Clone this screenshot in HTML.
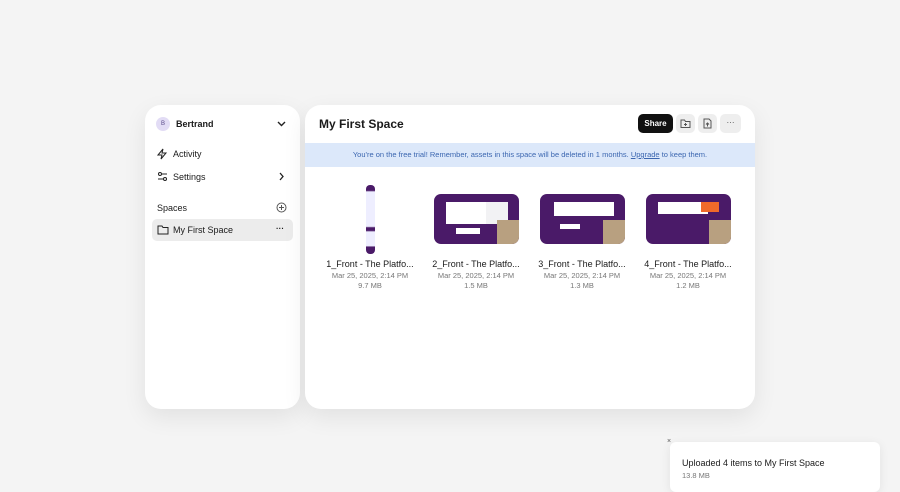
<!DOCTYPE html><html><head><style>
*{box-sizing:border-box;margin:0;padding:0}
body{width:900px;height:484px;background:#f4f4f4;font-family:"Liberation Sans",sans-serif;position:relative;overflow:hidden;color:#1a1a1a}
.p{position:absolute;background:#fff;border-radius:16px;box-shadow:0 8px 24px rgba(0,0,0,.08)}
.t{position:absolute;font-size:9px;white-space:nowrap}
.c{text-align:center;width:100px}
.g{color:#777;font-size:7.5px}
.th{position:absolute;top:194px;width:85px;height:50px;border-radius:7px;background:#4a1a68;overflow:hidden}
.b{position:absolute;top:9px;width:19px;height:19px;background:#eee;border-radius:5px}
.b svg{position:absolute;left:4px;top:4px}
</style></head><body>
<div class="p" style="left:145px;top:105px;width:155px;height:304px">
 <div style="position:absolute;left:11px;top:12px;width:14px;height:14px;border-radius:50%;background:#e2dcf5;font-size:6px;text-align:center;line-height:14px;color:#5a4a8a">B</div>
 <div class="t" style="left:31px;top:14px;font-weight:bold">Bertrand</div>
 <svg style="position:absolute;left:132px;top:15px" width="9" height="7"><path d="M1 2l3.5 3.5L8 2" stroke="#222" stroke-width="1.4" fill="none"/></svg>
 <svg style="position:absolute;left:12px;top:43px" width="11" height="12"><path d="M6 1L1 7h4l-1 4 5-6H5z" stroke="#222" fill="none"/></svg>
 <div class="t" style="left:28px;top:44px">Activity</div>
 <svg style="position:absolute;left:12px;top:66px" width="11" height="11"><path d="M1 3h9M1 8h9" stroke="#222"/><circle cx="3" cy="3" r="1.5" fill="#fff" stroke="#222"/><circle cx="8" cy="8" r="1.5" fill="#fff" stroke="#222"/></svg>
 <div class="t" style="left:28px;top:67px">Settings</div>
 <svg style="position:absolute;left:134px;top:67px" width="6" height="9"><path d="M1 1l3 3.5L1 8" stroke="#222" stroke-width="1.3" fill="none"/></svg>
 <div class="t" style="left:12px;top:98px">Spaces</div>
 <svg style="position:absolute;left:131px;top:97px" width="11" height="11"><circle cx="5.5" cy="5.5" r="4.5" stroke="#555" fill="none"/><path d="M5.5 3v5M3 5.5h5" stroke="#555"/></svg>
 <div style="position:absolute;left:7px;top:114px;width:141px;height:22px;border-radius:5px;background:#ececec"></div>
 <svg style="position:absolute;left:12px;top:119px" width="12" height="11"><path d="M1 2h4l1 1.5h5V10H1z" stroke="#222" fill="none"/></svg>
 <div class="t" style="left:28px;top:120px">My First Space</div>
 <div class="t" style="left:131px;top:119px;font-weight:bold;font-size:8px">···</div>
</div>
<div class="p" style="left:305px;top:105px;width:450px;height:304px;overflow:hidden">
 <div class="t" style="left:14px;top:12px;font-size:12px;font-weight:bold">My First Space</div>
 <div style="position:absolute;left:333px;top:9px;width:35px;height:19px;background:#111;border-radius:5px;color:#fff;font-size:8px;font-weight:bold;text-align:center;line-height:19px">Share</div>
 <div class="b" style="left:371px"><svg width="11" height="11"><path d="M1 2h3.5l1 1.5H10V9.5H1z" stroke="#555" fill="none"/><path d="M5.5 5v3M4 6.5h3" stroke="#555"/></svg></div>
 <div class="b" style="left:393px"><svg width="11" height="11"><path d="M2 1h5l2 2v7H2z" stroke="#555" fill="none"/><path d="M5.5 8.5V5M4 6.5l1.5-1.5L7 6.5" stroke="#555" fill="none"/></svg></div>
 <div class="b" style="left:415px;width:21px;font-size:8px;text-align:center;line-height:17px;color:#444">···</div>
 <div style="position:absolute;left:0;top:38px;width:450px;height:24px;background:#dce8fa;color:#3b66b0;font-size:7.5px;text-align:center;line-height:24px">You're on the free trial! Remember, assets in this space will be deleted in 1 months. <u>Upgrade</u> to keep them.</div>
</div>
<div style="position:absolute;left:366px;top:185px;width:9px;height:69px;background:linear-gradient(#4a1a68 0 8%,#eef 10% 60%,#4a1a68 62% 66%,#eef 68% 88%,#4a1a68 90%);border-radius:4px"></div>
<div class="th" style="left:434px"><div style="position:absolute;left:12px;top:8px;width:40px;height:22px;background:#fff"></div><div style="position:absolute;left:52px;top:8px;width:22px;height:22px;background:#f2f2f4"></div><div style="position:absolute;left:22px;top:34px;width:24px;height:6px;background:#fff"></div><div style="position:absolute;right:0;bottom:0;width:22px;height:24px;background:#b8a080"></div></div>
<div class="th" style="left:540px"><div style="position:absolute;left:14px;top:8px;width:60px;height:14px;background:#fff"></div><div style="position:absolute;left:20px;top:30px;width:20px;height:5px;background:#fff"></div><div style="position:absolute;right:0;bottom:0;width:22px;height:24px;background:#b8a080"></div></div>
<div class="th" style="left:646px"><div style="position:absolute;left:12px;top:8px;width:50px;height:12px;background:#fff"></div><div style="position:absolute;left:55px;top:8px;width:18px;height:10px;background:#f06a2a"></div><div style="position:absolute;right:0;bottom:0;width:22px;height:24px;background:#b8a080"></div></div>
<div class="t c" style="left:320px;top:259px">1_Front - The Platfo...</div>
<div class="t c g" style="left:320px;top:271px">Mar 25, 2025, 2:14 PM</div>
<div class="t c g" style="left:320px;top:281px">9.7 MB</div>
<div class="t c" style="left:426px;top:259px">2_Front - The Platfo...</div>
<div class="t c g" style="left:426px;top:271px">Mar 25, 2025, 2:14 PM</div>
<div class="t c g" style="left:426px;top:281px">1.5 MB</div>
<div class="t c" style="left:532px;top:259px">3_Front - The Platfo...</div>
<div class="t c g" style="left:532px;top:271px">Mar 25, 2025, 2:14 PM</div>
<div class="t c g" style="left:532px;top:281px">1.3 MB</div>
<div class="t c" style="left:638px;top:259px">4_Front - The Platfo...</div>
<div class="t c g" style="left:638px;top:271px">Mar 25, 2025, 2:14 PM</div>
<div class="t c g" style="left:638px;top:281px">1.2 MB</div>
<div style="position:absolute;left:670px;top:442px;width:210px;height:50px;background:#fff;border-radius:6px;box-shadow:0 2px 10px rgba(0,0,0,.08)"></div>
<div class="t" style="left:667px;top:438px;font-size:7px;color:#555">×</div>
<div class="t" style="left:682px;top:458px">Uploaded 4 items to My First Space</div>
<div class="t g" style="left:682px;top:471px">13.8 MB</div>
</body></html>
